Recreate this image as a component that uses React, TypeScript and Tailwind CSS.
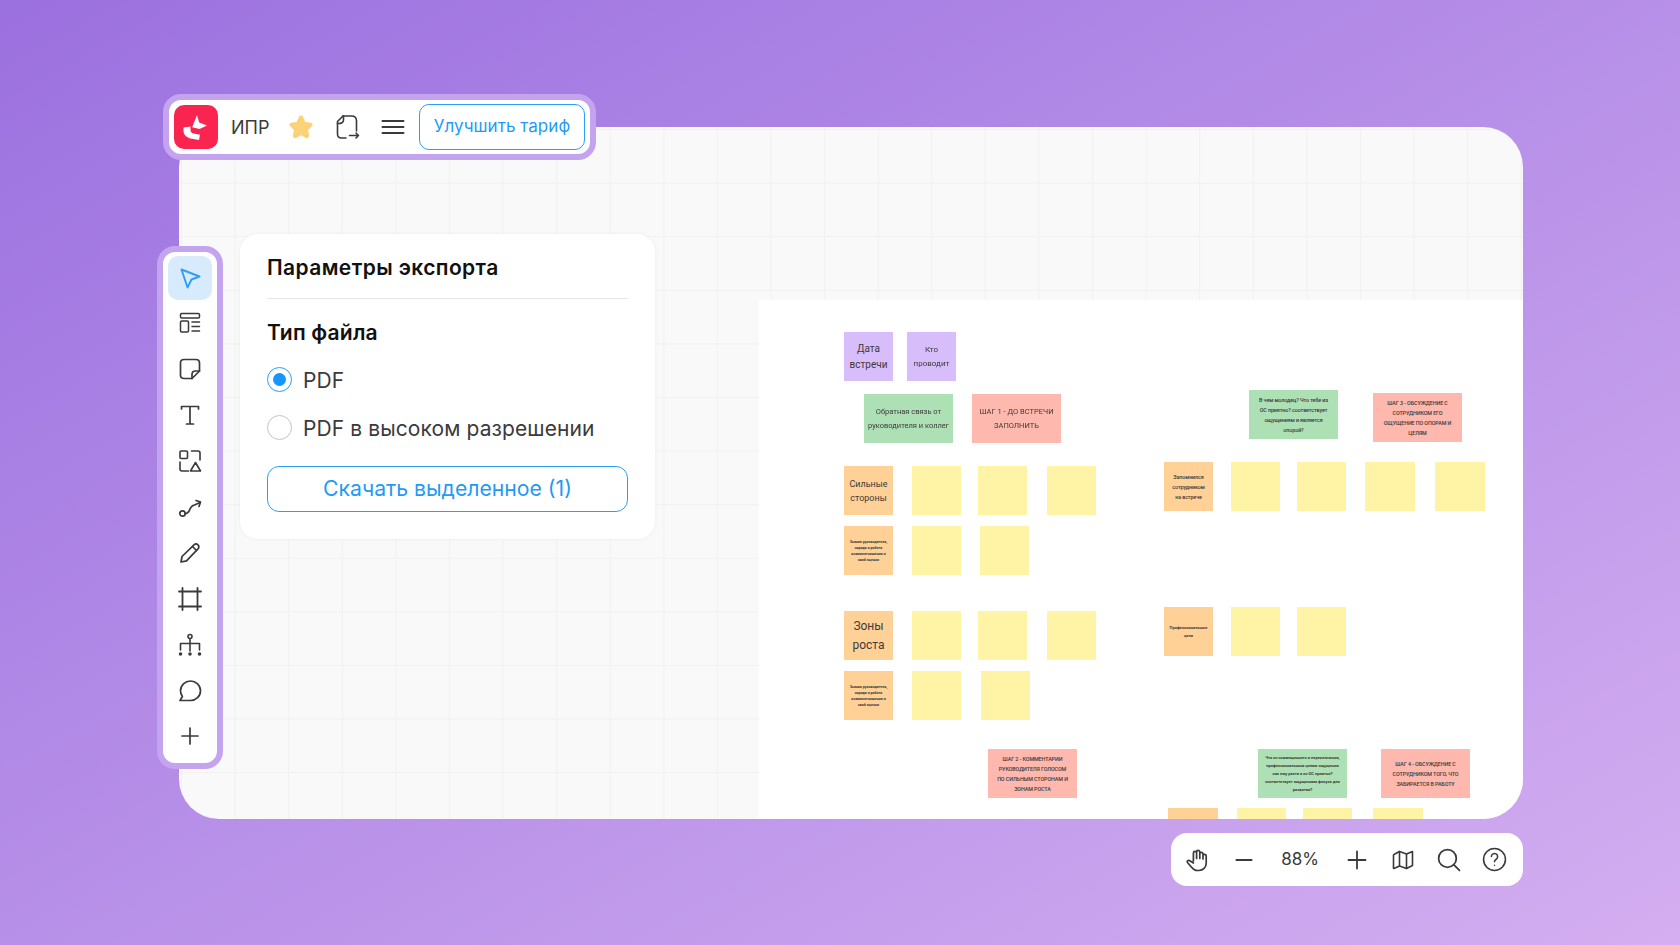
import React from 'react';

const INK = '#3a3a3c';

const Ico: React.FC<{ size?: number; vb?: string; color?: string; sw?: number; children: React.ReactNode }> = ({
  size = 24,
  vb = '0 0 24 24',
  color = INK,
  sw = 1.7,
  children,
}) => (
  <svg width={size} height={size} viewBox={vb} fill="none" stroke={color} strokeWidth={sw} strokeLinecap="round" strokeLinejoin="round">
    {children}
  </svg>
);

const Logo = () => (
  <svg width="44" height="44" viewBox="0 0 44 44">
    <rect width="44" height="44" rx="10" fill="#f9244f" />
    <path d="M9.5 22.5 L16.5 21.5 V25 C16.5 27 17.6 28 19.5 28.5 L26 29.8 L25 35 L18 33.8 C13 33 9.5 30 9.5 26 Z" fill="#fff" />
    <path d="M23 10 L25.2 17.5 L33 20.5 L25.5 24 L18.2 22.2 Z" fill="#fff" />
  </svg>
);

const Star = () => (
  <svg width="26" height="26" viewBox="0 0 26 26">
    <path
      d="M13 1.5 C14 1.5 14.6 2 15.1 3 L17.4 7.9 L22.7 8.7 C24.6 9 25.3 10.8 24 12.1 L20.1 16 L21 21.6 C21.3 23.6 19.6 24.8 17.9 23.9 L13 21.3 L8.1 23.9 C6.4 24.8 4.7 23.6 5 21.6 L5.9 16 L2 12.1 C0.7 10.8 1.4 9 3.3 8.7 L8.6 7.9 L10.9 3 C11.4 2 12 1.5 13 1.5 Z"
      fill="#fbd277"
    />
  </svg>
);

const ExportIcon = () => (
  <Ico size={26} vb="0 0 26 26" sw={1.6}>
    <path d="M9 2 H17.5 C20.7 2 22.5 3.8 22.5 7 V17" />
    <path d="M9 2 L3.5 7.5 V20 C3.5 22.6 5 24 7.5 24 H12" />
    <path d="M9.5 2 V6 C9.5 8.5 7.5 9.8 3.5 9.5" />
    <path d="M15.5 21.5 H24.5 M22 19 L24.5 21.5 L22 24" />
  </Ico>
);

const Burger = () => (
  <svg width="24" height="16" viewBox="0 0 24 16" fill="none" stroke={INK} strokeWidth="2" strokeLinecap="round">
    <path d="M1.5 2 H22.5 M1.5 8 H22.5 M1.5 14 H22.5" />
  </svg>
);

const toolIcons: React.ReactNode[] = [
  <Ico key="cursor" color="#2f9ff5" sw={1.9}>
    <path d="M3.5 3.5 L21.5 10.5 L13.5 13.5 L9.5 21.5 Z" />
  </Ico>,
  <Ico key="templates" sw={1.5}>
    <rect x="2.5" y="2.5" width="19" height="4.5" rx="1.2" />
    <rect x="2.5" y="10" width="8" height="11" rx="1.2" />
    <path d="M14 11 H21.5 M14 15.5 H21.5 M14 20 H21.5" />
  </Ico>,
  <Ico key="sticky">
    <path d="M14 21.5 H6 C3.8 21.5 2.5 20.2 2.5 18 V6 C2.5 3.8 3.8 2.5 6 2.5 H18 C20.2 2.5 21.5 3.8 21.5 6 V14 Z" />
    <path d="M14 21.5 V17.5 C14 15.5 15.5 14 17.5 14 H21.5" />
  </Ico>,
  <Ico key="text">
    <path d="M3.5 6 V3.5 H20.5 V6 M12 3.5 V21 M8.5 21 H15.5" />
  </Ico>,
  <Ico key="shapes" sw={1.6}>
    <rect x="2" y="2" width="7.5" height="7.5" rx="1" />
    <path d="M13.5 2 H20 C21.2 2 22 2.8 22 4 V11" />
    <path d="M2 13 V20 C2 21.2 2.8 22 4 22 H10.5" />
    <path d="M17.5 13.5 L22.5 22 H12.5 Z" />
  </Ico>,
  <Ico key="connector">
    <circle cx="4.5" cy="18.5" r="2.7" />
    <path d="M7.2 18.5 C10.5 18.5 11 16.5 12 14 C13 11.5 14.5 10.5 16.5 10 L22 7.5" />
    <path d="M18 5.5 L22.5 7 L21 11.5" />
  </Ico>,
  <Ico key="pen">
    <path d="M3 21 L4 15.5 L16 3.8 C17.2 2.7 18.8 2.7 20 3.8 C21.2 5 21.2 6.7 20 7.9 L8.5 19.8 Z" />
    <path d="M14.5 5.5 L18.5 9.5" />
  </Ico>,
  <Ico key="frame" sw={1.8}>
    <path d="M4.5 1 V23 M19.5 1 V23 M1 4.5 H23 M1 19.5 H23" />
  </Ico>,
  <Ico key="tree" sw={1.6}>
    <circle cx="12" cy="3.5" r="2" />
    <path d="M12 5.5 V18 M2.5 17 V10.5 H21.5 V17" />
    <circle cx="2.5" cy="21" r="1" fill={INK} />
    <circle cx="12" cy="21" r="1" fill={INK} />
    <circle cx="21.5" cy="21" r="1" fill={INK} />
  </Ico>,
  <Ico key="comment">
    <path d="M12.5 2 C18 2 22.5 6.3 22.5 11.7 C22.5 17.2 18 21.5 12.5 21.5 H2 L4.4 17.5 C3.2 15.8 2.5 13.8 2.5 11.7 C2.5 6.3 7 2 12.5 2 Z" />
  </Ico>,
  <Ico key="plus">
    <path d="M12 4 V20 M4 12 H20" />
  </Ico>,
];

const Y = 'bg-[#fff4a6]';
const O = 'bg-[#ffd197]';
const P = 'bg-[#d8bdfb]';
const G = 'bg-[#aee0b6]';
const R = 'bg-[#ffb8ae]';

const TINY = 'text-[3.6px] leading-[6px] font-bold';
const SMALL = 'text-[5.4px] leading-[10px] font-medium tracking-[-0.1px]';
const TINY2 = 'text-[4px] leading-[8px] font-bold';

// board origin is 759,300
const stickies: { pos: string; size: string; color: string; text?: string; txt?: string }[] = [
  { pos: 'left-[85px] top-[32px]', size: 'w-[49px] h-[49px]', color: P, text: 'Дата\nвстречи', txt: 'text-[10px] leading-[16px]' },
  { pos: 'left-[148px] top-[32px]', size: 'w-[49px] h-[49px]', color: P, text: 'Кто\nпроводит', txt: 'text-[8px] leading-[14px]' },
  { pos: 'left-[105px] top-[94px]', size: 'w-[89px] h-[49px]', color: G, text: 'Обратная связь от\nруководителя и коллег', txt: 'text-[7.5px] leading-[14px]' },
  { pos: 'left-[213px] top-[94px]', size: 'w-[89px] h-[49px]', color: R, text: 'ШАГ 1 - ДО ВСТРЕЧИ\nЗАПОЛНИТЬ', txt: 'text-[7.5px] leading-[14px]' },
  { pos: 'left-[85px] top-[166px]', size: 'w-[49px] h-[49px]', color: O, text: 'Сильные\nстороны', txt: 'text-[9px] leading-[14px]' },
  { pos: 'left-[153px] top-[166px]', size: 'w-[49px] h-[49px]', color: Y },
  { pos: 'left-[219px] top-[166px]', size: 'w-[49px] h-[49px]', color: Y },
  { pos: 'left-[288px] top-[166px]', size: 'w-[49px] h-[49px]', color: Y },
  { pos: 'left-[85px] top-[226px]', size: 'w-[49px] h-[49px]', color: O, text: 'Знания руководитель,\nнарода и работа\nвзаимоотношения и\nсвой оценки', txt: TINY },
  { pos: 'left-[153px] top-[226px]', size: 'w-[49px] h-[49px]', color: Y },
  { pos: 'left-[221px] top-[226px]', size: 'w-[49px] h-[49px]', color: Y },
  { pos: 'left-[85px] top-[311px]', size: 'w-[49px] h-[49px]', color: O, text: 'Зоны\nроста', txt: 'text-[12px] leading-[19px]' },
  { pos: 'left-[153px] top-[311px]', size: 'w-[49px] h-[49px]', color: Y },
  { pos: 'left-[219px] top-[311px]', size: 'w-[49px] h-[49px]', color: Y },
  { pos: 'left-[288px] top-[311px]', size: 'w-[49px] h-[49px]', color: Y },
  { pos: 'left-[85px] top-[371px]', size: 'w-[49px] h-[49px]', color: O, text: 'Знания руководитель,\nнарода и работа\nвзаимоотношения и\nсвой оценки', txt: TINY },
  { pos: 'left-[153px] top-[371px]', size: 'w-[49px] h-[49px]', color: Y },
  { pos: 'left-[222px] top-[371px]', size: 'w-[49px] h-[49px]', color: Y },
  { pos: 'left-[229px] top-[449px]', size: 'w-[89px] h-[49px]', color: R, text: 'ШАГ 2 - КОММЕНТАРИИ\nРУКОВОДИТЕЛЯ ГОЛОСОМ\nПО СИЛЬНЫМ СТОРОНАМ И\nЗОНАМ РОСТА', txt: SMALL },
  { pos: 'left-[490px] top-[90px]', size: 'w-[89px] h-[49px]', color: G, text: 'В чем молодец? Что тебе из\nОС приятно? соответствует\nощущениям и является\nопорой?', txt: SMALL },
  { pos: 'left-[614px] top-[93px]', size: 'w-[89px] h-[49px]', color: R, text: 'ШАГ 3 - ОБСУЖДЕНИЕ С\nСОТРУДНИКОМ ЕГО\nОЩУЩЕНИЕ ПО ОПОРАМ И\nЦЕЛЯМ', txt: SMALL },
  { pos: 'left-[405px] top-[162px]', size: 'w-[49px] h-[49px]', color: O, text: 'Запомнился\nсотрудником\nна встрече', txt: SMALL },
  { pos: 'left-[472px] top-[162px]', size: 'w-[49px] h-[49px]', color: Y },
  { pos: 'left-[538px] top-[162px]', size: 'w-[49px] h-[49px]', color: Y },
  { pos: 'left-[606px] top-[162px]', size: 'w-[50px] h-[49px]', color: Y },
  { pos: 'left-[676px] top-[162px]', size: 'w-[50px] h-[49px]', color: Y },
  { pos: 'left-[405px] top-[307px]', size: 'w-[49px] h-[49px]', color: O, text: 'Профессиональные\nцели', txt: TINY2 },
  { pos: 'left-[472px] top-[307px]', size: 'w-[49px] h-[49px]', color: Y },
  { pos: 'left-[538px] top-[307px]', size: 'w-[49px] h-[49px]', color: Y },
  { pos: 'left-[499px] top-[449px]', size: 'w-[89px] h-[49px]', color: G, text: 'Что из совмещенного и переключения,\nпрофессиональным целям ощущения\nкак ему расти и из ОС приятно?\nсоответствует ощущениям фокуса для\nразвития?', txt: TINY2 },
  { pos: 'left-[622px] top-[449px]', size: 'w-[89px] h-[49px]', color: R, text: 'ШАГ 4 - ОБСУЖДЕНИЕ С\nСОТРУДНИКОМ ТОГО, ЧТО\nЗАБИРАЕТСЯ В РАБОТУ', txt: SMALL },
  { pos: 'left-[409px] top-[508px]', size: 'w-[50px] h-[49px]', color: O },
  { pos: 'left-[478px] top-[508px]', size: 'w-[49px] h-[49px]', color: Y },
  { pos: 'left-[544px] top-[508px]', size: 'w-[49px] h-[49px]', color: Y },
  { pos: 'left-[614px] top-[508px]', size: 'w-[50px] h-[49px]', color: Y },
];

const Radio: React.FC<{ checked?: boolean; label: string }> = ({ checked, label }) => (
  <div className="flex items-center h-[25px] gap-[11px]">
    <span
      className={
        checked
          ? 'w-[25px] h-[25px] rounded-full border border-[#2a9ff5] flex items-center justify-center'
          : 'w-[25px] h-[25px] rounded-full border border-[#c4c4c6] flex items-center justify-center'
      }
    >
      {checked && <span className="w-[13px] h-[13px] rounded-full bg-[#1596fb]" />}
    </span>
    <span className="text-[21px] tracking-[0.1px] text-[#3a3a3c] translate-y-[1px]">{label}</span>
  </div>
);

export default function App() {
  return (
    <div className="relative w-[1680px] h-[945px] overflow-hidden bg-gradient-to-br from-[#9b70df] to-[#d4aef0] font-['Inter',sans-serif]">
      <div className="pt-[127px] pl-[179px] w-[1523px]">
        {/* canvas */}
        <div className="relative w-[1344px] h-[692px] rounded-[40px] overflow-hidden bg-[#f9f9f9] bg-[linear-gradient(#f1f1f1_1px,transparent_1px),linear-gradient(90deg,#f1f1f1_1px,transparent_1px)] bg-[size:53.6px_53.6px] bg-[position:2px_2px]">
          <div className="absolute left-[580px] top-[173px] w-[764px] h-[519px] bg-white font-['Roboto',sans-serif] overflow-hidden">
            <div className="blur-[0.35px]">
              {stickies.map((s, i) => (
                <div
                  key={i}
                  className={`absolute ${s.pos} ${s.size} ${s.color} flex items-center justify-center text-center whitespace-pre-line text-[#3d3a3a] ${s.txt ?? ''}`}
                >
                  {s.text}
                </div>
              ))}
            </div>
          </div>
        </div>

        {/* zoom bar */}
        <div className="mt-[14px] ml-auto w-[352px] h-[53px] rounded-[16px] bg-white flex items-center pl-[14px]">
          <Ico size={24}>
            <path d="M18 11 V6 a1.6 1.6 0 0 0 -3.2 0 M14.8 10.5 V4 a1.6 1.6 0 0 0 -3.2 0 V10.5 M11.6 10.5 V5 a1.6 1.6 0 0 0 -3.2 0 V13 M18 8 a1.6 1.6 0 0 1 3.2 0 V15 C21.2 19.5 18 22.5 14 22.5 H12.5 C9.5 22.5 8 21 6.5 19.2 L2.5 14.5 C1.6 13.3 3 11.8 4.4 12.6 L8.4 15" />
          </Ico>
          <svg className="ml-[23px]" width="24" height="24" viewBox="0 0 24 24" fill="none" stroke={INK} strokeWidth="2.2" strokeLinecap="round"><path d="M4.5 12 H19.5" /></svg>
          <span className="ml-[14px] w-[60px] text-center text-[17px] text-[#3a3a3c]">88%</span>
          <svg className="ml-[15px]" width="24" height="24" viewBox="0 0 24 24" fill="none" stroke={INK} strokeWidth="1.8" strokeLinecap="round"><path d="M12 3.5 V20.5 M3.5 12 H20.5" /></svg>
          <span className="ml-[22px]">
            <Ico size={24} sw={1.6}>
              <path d="M3 6.5 L8.5 3.5 L15.5 6 L21.5 3.5 V17.5 L15.5 20.5 L8.5 18 L3 20.5 C2 20.5 2.5 19.5 2.5 18 V7 Z" />
              <path d="M8.5 3.5 V18 M15.5 6 V20.5" />
            </Ico>
          </span>
          <span className="ml-[21px]">
            <Ico size={25} sw={1.7}>
              <circle cx="11" cy="11" r="8.5" />
              <path d="M17.5 17.5 L22.5 22.5" />
            </Ico>
          </span>
          <span className="ml-[21px]">
            <Ico size={25} sw={1.5}>
              <circle cx="12" cy="12" r="10.5" />
              <path d="M9 9.2 a3 3 0 1 1 4.6 2.6 c-1 .6 -1.6 1.2 -1.6 2.4" />
              <path d="M12 17.5 V17.6" />
            </Ico>
          </span>
        </div>
      </div>

      {/* top toolbar */}
      <div className="absolute left-[163px] top-[94px] w-[433px] h-[66px] rounded-[18px] border-[6px] border-[#c4a3ef] bg-white flex items-center pl-[5px] pr-[5px]">
        <Logo />
        <span className="ml-[13px] w-[37px] text-[18px] text-[#3a3a3c]">ИПР</span>
        <span className="ml-[20px]"><Star /></span>
        <span className="ml-[20px]"><ExportIcon /></span>
        <span className="ml-[21px]"><Burger /></span>
        <button className="ml-[14px] w-[166px] h-[46px] rounded-[10px] border border-[#2a9ff5] text-[17px] tracking-[0.05px] text-[#1f9af5]">
          Улучшить тариф
        </button>
      </div>

      {/* left tools */}
      <div className="absolute left-[157px] top-[246px] w-[66px] h-[523px] rounded-[18px] border-[6px] border-[#c4a3ef] bg-white flex flex-col items-center pt-[3.5px] gap-[1.9px]">
        {toolIcons.map((icon, i) => (
          <div
            key={i}
            className={
              i === 0
                ? 'w-[44px] h-[44px] shrink-0 rounded-[10px] bg-[#d7ebfd] flex items-center justify-center'
                : 'w-[44px] h-[44px] shrink-0 rounded-[10px] flex items-center justify-center'
            }
          >
            {icon}
          </div>
        ))}
      </div>

      {/* export panel */}
      <div className="absolute left-[240px] top-[234px] w-[415px] h-[305px] rounded-[18px] bg-white shadow-[0_0_4px_rgba(0,0,0,0.05)] pl-[27px] pr-[27px] pt-[20px]">
        <div className="text-[21px] tracking-[0.4px] leading-[28px] font-semibold text-[#111] pb-[16px] border-b border-[#e6e6e8]">Параметры экспорта</div>
        <div className="mt-[20px] text-[21px] tracking-[0.2px] leading-[28px] font-semibold text-[#111]">Тип файла</div>
        <div className="mt-[20px] flex flex-col gap-[23px]">
          <Radio checked label="PDF" />
          <Radio label="PDF в высоком разрешении" />
        </div>
        <button className="mt-[26px] w-full h-[46px] rounded-[12px] border border-[#2a9ff5] text-[21.2px] text-[#1f9af5]">
          Скачать выделенное (1)
        </button>
      </div>
    </div>
  );
}
